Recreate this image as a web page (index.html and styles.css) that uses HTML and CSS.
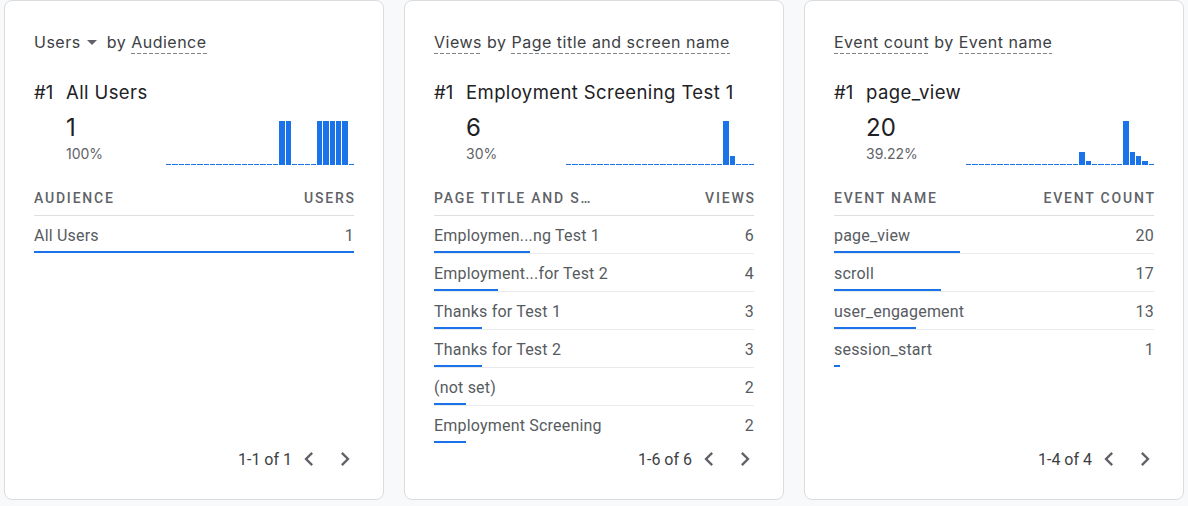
FILE: index.html
```html
<!DOCTYPE html>
<html lang="en">
<head>
<meta charset="utf-8">
<title>Cards</title>
<link rel="stylesheet" href="styles.css">
</head>
<body>
<main class="cards">

  <section class="card">
    <div class="title"><span>Users</span><svg class="drop" width="10" height="5" viewBox="0 0 10 5"><path d="M0 0h10L5 5z"/></svg><span class="by">by </span><span class="dim">Audience</span></div>
    <div class="headline"><span class="rank">#1</span><span>All Users</span></div>
    <div class="stats">
      <div class="nums"><div class="big">1</div><div class="pct">100%</div></div>
      <div class="spark">
        <i></i><i></i><i></i><i></i><i></i><i></i><i></i><i></i><i></i><i></i>
        <i></i><i></i><i></i><i></i><i></i><i></i><i></i><i></i><i class="v" style="height:100%"></i><i class="v" style="height:100%"></i>
        <i></i><i></i><i></i><i></i><i class="v" style="height:100%"></i><i class="v" style="height:100%"></i><i class="v" style="height:100%"></i><i class="v" style="height:100%"></i><i class="v" style="height:100%"></i><i></i>
      </div>
    </div>
    <div class="thead"><span>Audience</span><span>Users</span></div>
    <div class="row"><div class="cells"><span>All Users</span><span>1</span></div><div class="bar" style="width:100%"></div></div>
    <div class="pager"><span>1-1 of 1</span>
      <svg class="chev first" width="28" height="28" viewBox="0 0 24 24"><path d="M15.41 7.41L14 6l-6 6 6 6 1.41-1.41L10.83 12z"/></svg>
      <svg class="chev" width="28" height="28" viewBox="0 0 24 24"><path d="M10 6L8.59 7.41 13.17 12l-4.58 4.59L10 18l6-6z"/></svg>
    </div>
  </section>

  <section class="card">
    <div class="title"><span class="dim">Views</span><span class="by"> by </span><span class="dim">Page title and screen name</span></div>
    <div class="headline"><span class="rank">#1</span><span>Employment Screening Test 1</span></div>
    <div class="stats">
      <div class="nums"><div class="big">6</div><div class="pct">30%</div></div>
      <div class="spark">
        <i></i><i></i><i></i><i></i><i></i><i></i><i></i><i></i><i></i><i></i>
        <i></i><i></i><i></i><i></i><i></i><i></i><i></i><i></i><i></i><i></i>
        <i></i><i></i><i></i><i></i><i></i><i class="v" style="height:100%"></i><i class="v" style="height:20%"></i><i></i><i></i><i></i>
      </div>
    </div>
    <div class="thead"><span>Page title and s…</span><span>Views</span></div>
    <div class="row"><div class="cells"><span>Employmen...ng Test 1</span><span>6</span></div><div class="bar" style="width:30%"></div></div>
    <div class="row"><div class="cells"><span>Employment...for Test 2</span><span>4</span></div><div class="bar" style="width:20%"></div></div>
    <div class="row"><div class="cells"><span>Thanks for Test 1</span><span>3</span></div><div class="bar" style="width:15%"></div></div>
    <div class="row"><div class="cells"><span>Thanks for Test 2</span><span>3</span></div><div class="bar" style="width:15%"></div></div>
    <div class="row"><div class="cells"><span>(not set)</span><span>2</span></div><div class="bar" style="width:10%"></div></div>
    <div class="row"><div class="cells"><span>Employment Screening</span><span>2</span></div><div class="bar" style="width:10%"></div></div>
    <div class="pager"><span>1-6 of 6</span>
      <svg class="chev first" width="28" height="28" viewBox="0 0 24 24"><path d="M15.41 7.41L14 6l-6 6 6 6 1.41-1.41L10.83 12z"/></svg>
      <svg class="chev" width="28" height="28" viewBox="0 0 24 24"><path d="M10 6L8.59 7.41 13.17 12l-4.58 4.59L10 18l6-6z"/></svg>
    </div>
  </section>

  <section class="card">
    <div class="title"><span class="dim">Event count</span><span class="by"> by </span><span class="dim">Event name</span></div>
    <div class="headline"><span class="rank">#1</span><span>page_view</span></div>
    <div class="stats">
      <div class="nums"><div class="big">20</div><div class="pct">39.22%</div></div>
      <div class="spark">
        <i></i><i></i><i></i><i></i><i></i><i></i><i></i><i></i><i></i><i></i>
        <i></i><i></i><i></i><i></i><i></i><i></i><i></i><i></i><i class="v" style="height:30%"></i><i class="v" style="height:10%"></i>
        <i></i><i></i><i></i><i></i><i></i><i class="v" style="height:100%"></i><i class="v" style="height:30%"></i><i class="v" style="height:20%"></i><i class="v" style="height:10%"></i><i></i>
      </div>
    </div>
    <div class="thead"><span>Event name</span><span>Event count</span></div>
    <div class="row"><div class="cells"><span>page_view</span><span>20</span></div><div class="bar" style="width:39.22%"></div></div>
    <div class="row"><div class="cells"><span>scroll</span><span>17</span></div><div class="bar" style="width:33.33%"></div></div>
    <div class="row"><div class="cells"><span>user_engagement</span><span>13</span></div><div class="bar" style="width:25.49%"></div></div>
    <div class="row"><div class="cells"><span>session_start</span><span>1</span></div><div class="bar" style="width:1.96%"></div></div>
    <div class="pager"><span>1-4 of 4</span>
      <svg class="chev first" width="28" height="28" viewBox="0 0 24 24"><path d="M15.41 7.41L14 6l-6 6 6 6 1.41-1.41L10.83 12z"/></svg>
      <svg class="chev" width="28" height="28" viewBox="0 0 24 24"><path d="M10 6L8.59 7.41 13.17 12l-4.58 4.59L10 18l6-6z"/></svg>
    </div>
  </section>

</main>
</body>
</html>
```

FILE: styles.css
```css
* { box-sizing: border-box; }

html, body {
  margin: 0;
  padding: 0;
  background: #f8f9fa;
}

body {
  font-family: Roboto, "Liberation Sans", Arial, sans-serif;
  color: #5f6368;
}

.cards {
  display: flex;
  gap: 20px;
  padding: 0 0 0 4px;
}

.card {
  width: 380px;
  height: 500px;
  flex: none;
  background: #ffffff;
  border: 1px solid #dadce0;
  border-radius: 8px;
  padding: 29px 29px 24px;
  display: flex;
  flex-direction: column;
}

.title {
  font-family: Inter, "Open Sans", sans-serif;
  font-size: 16px;
  line-height: 24px;
  color: #3c4043;
  white-space: nowrap;
  letter-spacing: 0.5px;
}

.title .dim {
  padding-bottom: 2px;
  background-image: linear-gradient(to right, #80868b 4px, transparent 4px);
  background-size: 6px 1px;
  background-repeat: repeat-x;
  background-position: left bottom;
}

.title .drop {
  fill: #5f6368;
  margin: 0 10px 0 6px;
  vertical-align: 3px;
}

.headline {
  margin-top: 24px;
  font-family: Inter, "Open Sans", sans-serif;
  font-size: 18.5px;
  line-height: 28px;
  letter-spacing: 0.4px;
  color: #202124;
  white-space: nowrap;
  display: flex;
}

.headline .rank {
  width: 32px;
  flex: none;
  letter-spacing: 0;
}

.stats {
  margin-top: 6px;
  margin-left: 32px;
  display: flex;
  justify-content: space-between;
  align-items: flex-end;
}

.big {
  font-family: Inter, "Open Sans", sans-serif;
  font-size: 24px;
  line-height: 32px;
  color: #202124;
}

.pct {
  font-family: Inter, "Open Sans", sans-serif;
  font-size: 14px;
  line-height: 20px;
  color: #5f6368;
}

.spark {
  width: 188px;
  height: 44px;
  display: flex;
  gap: 1px;
  align-items: flex-end;
  margin-bottom: -1px;
}

.spark i {
  flex: 1 1 0;
  height: 1px;
  background: #1a73e8;
}

.thead {
  margin-top: 26px;
  display: flex;
  justify-content: space-between;
  font-size: 14px;
  line-height: 16px;
  font-weight: 500;
  letter-spacing: 1.8px;
  text-transform: uppercase;
  color: #5f6368;
  padding-bottom: 9px;
  border-bottom: 1px solid #e0e0e0;
}

.thead span:last-child {
  margin-right: -1.8px;
}

.row {
  padding-top: 10px;
  border-bottom: 1px solid #e8eaed;
}

.row:nth-last-child(2) {
  border-bottom: 0;
}

.cells {
  display: flex;
  justify-content: space-between;
  font-size: 16px;
  line-height: 20px;
  letter-spacing: 0.2px;
  color: #575b5f;
}

.bar {
  height: 2px;
  margin-top: 5px;
  background: #1a73e8;
}

.pager {
  margin-top: auto;
  margin-right: -5px;
  height: 32px;
  display: flex;
  justify-content: flex-end;
  align-items: center;
  font-size: 16px;
  color: #3c4043;
}

.chev {
  fill: #5f6368;
  margin-left: 8px;
  flex: none;
}

.chev.first {
  margin-left: 3px;
}
```
